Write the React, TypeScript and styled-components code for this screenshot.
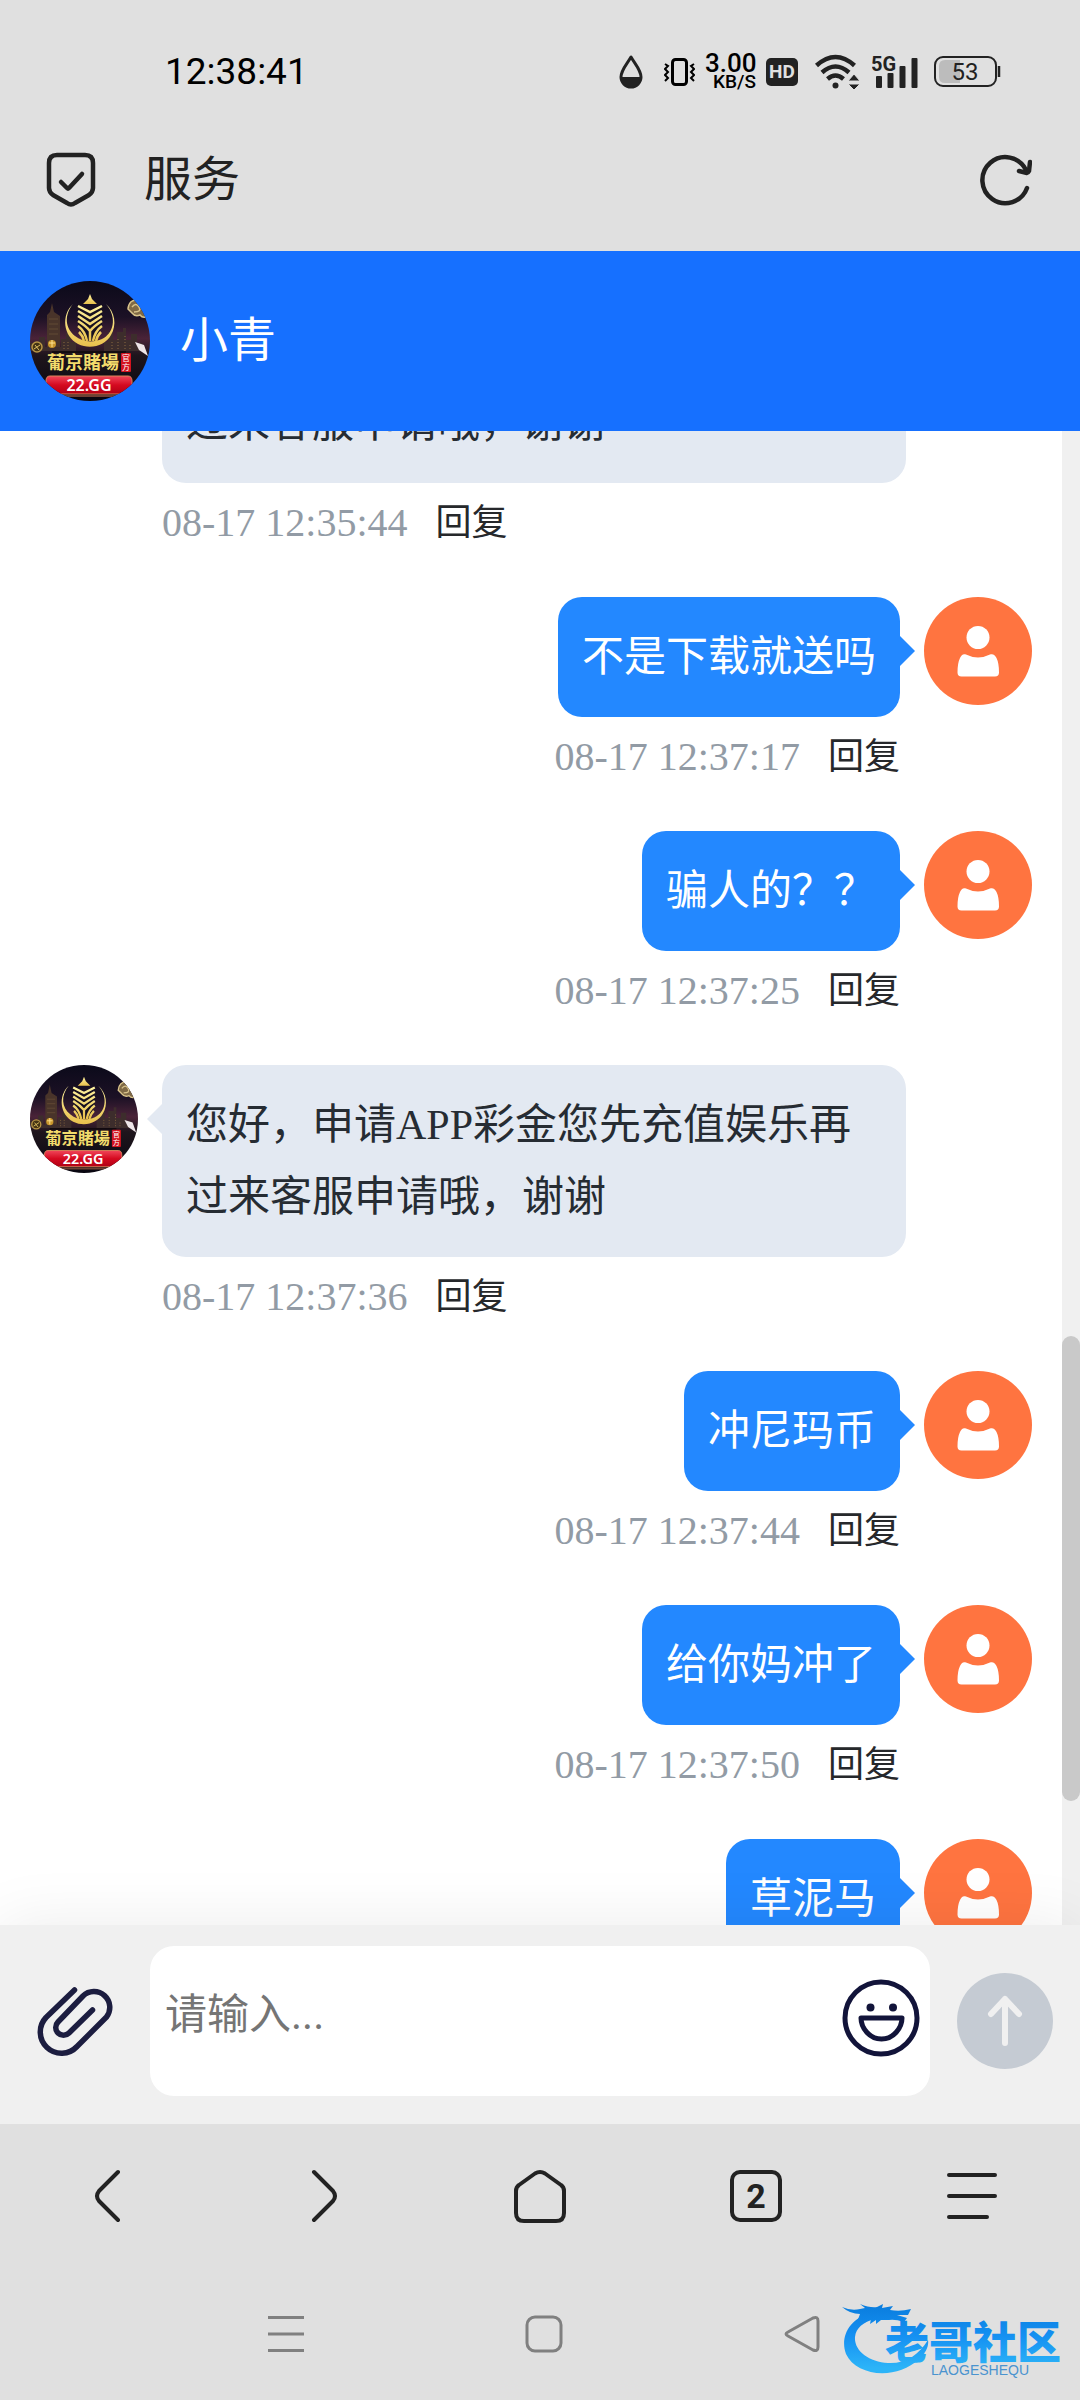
import React, { useLayoutEffect, useRef } from "react";
import styled, { createGlobalStyle } from "styled-components";

const sans = `Roboto, "Noto Sans CJK SC", sans-serif`;
const serif = `"Liberation Serif", "Noto Sans CJK SC", serif`;

const GlobalStyle = createGlobalStyle`
  * { box-sizing: border-box; }
  body { margin: 0; background: #e0e0e0; font-family: ${sans}; }
  button { border: 0; padding: 0; background: none; color: inherit; font: inherit; cursor: pointer; }
  svg { display: block; flex: none; }
`;

const Screen = styled.div`
  display: flex;
  flex-direction: column;
  height: 100vh;
  position: relative;
  background: #e0e0e0;
  color: #222;
`;

const StatusBar = styled.div`
  display: flex;
  align-items: center;
  justify-content: space-between;
  flex: none;
  height: 108px;
  padding: 36px 79px 0 165px;
  color: #000;
`;

const Clock = styled.time`
  font-size: 37px;
  line-height: 48px;
  font-weight: 400;
`;

const StatusIcons = styled.div`
  display: flex;
  align-items: center;
  gap: 10px;
`;

const NetSpeed = styled.div`
  width: 51px;
  text-align: right;
  font-weight: 500;
  font-size: 26px;
  line-height: 20px;
  small {
    display: block;
    font-size: 19px;
    line-height: 18px;
  }
`;

const HdBadge = styled.span`
  width: 32px;
  height: 28px;
  border-radius: 5px;
  background: #222;
  color: #e0e0e0;
  font-size: 19px;
  line-height: 28px;
  font-weight: 700;
  text-align: center;
`;

const AddressBar = styled.div`
  display: flex;
  align-items: center;
  flex: none;
  height: 143px;
  padding: 0 48px 0 46px;
  gap: 48px;
`;

const PageTitle = styled.h1`
  flex: 1;
  margin: 0;
  font-size: 48px;
  line-height: 72px;
  font-weight: 400;
`;

const ChatHeader = styled.header`
  display: flex;
  align-items: center;
  flex: none;
  gap: 30px;
  height: 180px;
  padding: 0 30px;
  background: #1670ff;
  color: #fff;
`;

const AgentName = styled.h2`
  margin: 0;
  font-size: 48px;
  line-height: 72px;
  font-weight: 400;
`;

const ChatArea = styled.main`
  display: grid;
  grid-template-columns: 1fr 18px;
  flex: 1;
  min-height: 0;
  background: #fff;
`;

const Messages = styled.ol`
  margin: 0;
  padding: 0 30px;
  min-height: 0;
  list-style: none;
  overflow-y: auto;
  scrollbar-width: none;
  font-family: ${serif};
`;

const Track = styled.div`
  min-height: 0;
  display: grid;
  grid-template-rows: 905fr 465fr 124fr;
  background: #f0f0f0;
`;

const Thumb = styled.div`
  grid-row: 2;
  border-radius: 9px;
  background: #c9c9c9;
`;

const MessageRow = styled.li<{ $mine?: boolean }>`
  display: flex;
  flex-direction: ${(p) => (p.$mine ? "row-reverse" : "row")};
  align-items: flex-start;
  gap: 24px;
  padding-bottom: 50px;
`;

const MessageBody = styled.div<{ $mine?: boolean }>`
  display: flex;
  flex-direction: column;
  align-items: ${(p) => (p.$mine ? "flex-end" : "flex-start")};
  ${(p) => (p.$mine ? "margin-left" : "margin-right")}: 126px;
`;

const Bubble = styled.p<{ $mine?: boolean }>`
  position: relative;
  margin: 0;
  padding: 24px;
  border-radius: 24px;
  background: ${(p) => (p.$mine ? "#2388ff" : "#e3e9f2")};
  color: ${(p) => (p.$mine ? "#fff" : "#262c33")};
  font-size: 42px;
  line-height: 72px;
  &::after {
    content: "";
    position: absolute;
    top: 39px;
    ${(p) => (p.$mine ? "left: 100%" : "right: 100%")};
    border: 15px solid transparent;
    ${(p) => (p.$mine ? "border-left-color: #2388ff; border-right: 0" : "border-right-color: #e3e9f2; border-left: 0")};
  }
`;

const Meta = styled.div`
  display: flex;
  align-items: center;
  gap: 28px;
  height: 48px;
  margin-top: 16px;
`;

const Stamp = styled.time`
  color: #929ba5;
  font-size: 40px;
  line-height: 48px;
`;

const Reply = styled.button`
  color: #26282b;
  font-family: ${sans};
  font-size: 36px;
  line-height: 48px;
`;

const Composer = styled.form`
  position: relative;
  display: grid;
  grid-template-columns: 150px 1fr 96px;
  align-items: center;
  flex: none;
  padding: 21px 27px 28px 0;
  background: #f0f0f0;
  box-shadow: 0 0 60px rgba(0, 0, 0, 0.08);
`;

const IconButton = styled.button`
  display: flex;
  align-items: center;
  justify-content: center;
`;

const InputBox = styled.div`
  display: flex;
  align-items: center;
  height: 150px;
  margin-right: 27px;
  padding: 0 10px 0 15px;
  border-radius: 24px;
  background: #fff;
`;

const TextBox = styled.textarea`
  flex: 1;
  min-width: 0;
  height: 150px;
  padding: 39px 0;
  border: 0;
  outline: 0;
  resize: none;
  background: transparent;
  color: #222;
  font-family: ${sans};
  font-size: 42px;
  line-height: 60px;
  &::placeholder { color: #757575; }
`;

const SendButton = styled(IconButton)`
  width: 96px;
  height: 96px;
  border-radius: 50%;
  background: #c5cbd3;
`;

const BrowserNav = styled.nav`
  position: relative;
  display: grid;
  grid-template-columns: repeat(5, 1fr);
  flex: none;
  height: 144px;
  background: #e0e0e0;
`;

const TabCount = styled.span`
  display: block;
  width: 52px;
  height: 52px;
  border: 4px solid #222;
  border-radius: 10px;
  font-size: 34px;
  line-height: 44px;
  font-weight: 700;
  text-align: center;
`;

const SystemNav = styled.nav`
  display: grid;
  grid-template-columns: repeat(3, 1fr);
  flex: none;
  height: 132px;
  padding: 0 149px 0 157px;
`;

const Watermark = styled.div`
  position: absolute;
  right: 12px;
  bottom: 20px;
`;

const AgentAvatar = ({ size }: { size: number }) => (
  <svg width={size} height={size} viewBox="0 0 120 120" role="img" aria-label="葡京賭場">
    <defs>
      <clipPath id={`round${size}`}><circle cx="60" cy="60" r="60" /></clipPath>
      <linearGradient id={`sky${size}`} x1="0" y1="0" x2="0" y2="1">
        <stop offset="0" stopColor="#0b0a1a" />
        <stop offset=".3" stopColor="#1c1125" />
        <stop offset=".48" stopColor="#4a2338" />
        <stop offset=".62" stopColor="#1e151c" />
        <stop offset="1" stopColor="#080610" />
      </linearGradient>
      <linearGradient id={`gold${size}`} x1="0" y1="0" x2="0" y2="1">
        <stop offset="0" stopColor="#fff3a0" />
        <stop offset="1" stopColor="#e8c04c" />
      </linearGradient>
      <linearGradient id={`red${size}`} x1="0" y1="0" x2="0" y2="1">
        <stop offset="0" stopColor="#f0465a" />
        <stop offset=".5" stopColor="#d50a20" />
        <stop offset="1" stopColor="#b00014" />
      </linearGradient>
    </defs>
    <g clipPath={`url(#round${size})`}>
      <rect width="120" height="120" fill={`url(#sky${size})`} />
      <path d="M17 70V34l3-3 2-9 2 9 6 4v35z" fill="#49342a" />
      <path d="M19 38h9M19 43h9M19 48h9M19 53h9" stroke="#634a34" strokeWidth="1" />
      <path d="M0 70V62h9v-6h6v10h16v-8h5v-6h5v9h5v9zM74 70v-9h4V51h5v8h4v-8h6v-4h3v12h5v-6h6v9h5v8z" fill="#3d2d2c" />
      <path d="M34 68v-7M38 68v-9M82 68v-9M88 68V56M95 68V55M100 68v-6" stroke="#8a6a40" strokeWidth="1" strokeDasharray="1 2" />
      <path d="M43 23C31 34 33 55 48 63c12 6 27 2 33-9 6-10 4-23-5-31 12 14 7 30-4 35-9 4-20 3-27-3-10-8-11-21-2-32z" fill={`url(#gold${size})`} />
      <path d="M60 13l2 5 5 5H53l5-5z" fill={`url(#gold${size})`} />
      <path d="M48 24l12 8 12-8v20l-6 16H54l-6-16z" fill="#161020" />
      <path
        d="M48 25l12 6 12-6M48 30l12 7 12-7M48 35l12 8 12-8M48 40q8 5 12 10 4-5 12-10M48 45q7 5 9 15M72 45q-7 5-9 15M49 51q4 4 5 9M71 51q-4 4-5 9M60 49v11"
        fill="none" stroke={`url(#gold${size})`} strokeWidth="2.500"
      />
      <path d="M98 28q1-10 10-9l6 7 4 9q-5 3-8-1-5 2-8-2zm4-2q4-5 7 0t-5 5" fill="#806a46" stroke="#d8c38b" strokeWidth="1.500" />
      <circle cx="7" cy="66" r="5" fill="#453414" stroke="#b89544" strokeWidth="1.500" />
      <path d="M4 68l6-4M5 64l4 5" stroke="#dfbf62" />
      <circle cx="22" cy="63" r="4" fill="#c8952b" /><path d="M19 62h6M22 59v7" stroke="#ffe391" />
      <path d="M105 61l9 3 4 11-9-6z" fill="#eee5e8" />
      <path d="M22 71h74" stroke="#000" />
      <text x="17" y="88" fontFamily="Noto Sans CJK TC, sans-serif" fontSize="18" fontWeight="700" fill="#f3dc6c">葡京賭場</text>
      <rect x="91" y="72" width="10" height="19" rx="1" fill="#d3131f" />
      <text x="92" y="80" fontFamily="Noto Sans CJK SC, sans-serif" fontSize="8" fill="#fff">官</text>
      <text x="92" y="89" fontFamily="Noto Sans CJK SC, sans-serif" fontSize="8" fill="#fff">方</text>
      <path d="M20 95h78q4 0 4 5v6q0 7-5 7H21q-5 0-5-7v-6q0-5 4-5z" fill={`url(#red${size})`} stroke="#d98358" strokeWidth="1" />
      <path d="M15 115h90" stroke="#6e4033" strokeWidth="2" />
      <text x="59" y="110" textAnchor="middle" fontFamily="Noto Sans, sans-serif" fontSize="16" fontWeight="600" fill="#fff">22.GG</text>
    </g>
  </svg>
);

const VisitorAvatar = () => (
  <svg width="108" height="108" viewBox="0 0 108 108" role="img" aria-label="访客">
    <circle cx="54" cy="54" r="54" fill="#ff7440" />
    <circle cx="54" cy="40.500" r="11.500" fill="#fff" />
    <path d="M42 57.500q12 6 24 0c3-1 5 .5 6.500 3.500q2.500 5 2.500 14.500 0 4-4 4H37.500q-4 0-4-4 0-9.500 2.500-14.500c1.500-3 3-4.500 6-3.500z" fill="#fff" />
  </svg>
);

const line = {
  fill: "none",
  stroke: "currentColor",
  strokeWidth: 4,
  strokeLinecap: "round" as const,
  strokeLinejoin: "round" as const,
};

const DropIcon = () => (
  <svg width="35" height="36" viewBox="0 0 35 36">
    <path d="M12 3C8 10 2 16 2 23a10 10 0 0 0 20 0C22 16 16 10 12 3z" fill="none" stroke="#222" strokeWidth="3" strokeLinejoin="round" />
    <path d="M2 23h20a10 10 0 0 1-20 0z" fill="#222" />
  </svg>
);

const VibrateIcon = () => (
  <svg width="31" height="32" viewBox="0 0 31 32" fill="none" stroke="#000">
    <rect x="8.500" y="3.500" width="14" height="25" rx="3" strokeWidth="3" />
    <path d="M1 8l3 2-3 3 3 3-3 3 3 3-3 3M30 8l-3 2 3 3-3 3 3 3-3 3 3 3" strokeWidth="2" />
  </svg>
);

const WifiIcon = () => (
  <svg width="54" height="36" viewBox="0 0 54 36" fill="none" stroke="#222" strokeWidth="4.500">
    <path d="M8.500 11.500q19-17 38 0M14 18.500q13.500-12 27 0M19.500 25q8-7 16 0" />
    <circle cx="27.500" cy="31.500" r="3" fill="#222" stroke="none" />
    <path d="M46 20l6 7H40zM46 36l6-6H40z" fill="#222" stroke="#e0e0e0" strokeWidth="1" />
  </svg>
);

const SignalIcon = () => (
  <svg width="52" height="36" viewBox="0 0 52 36" fill="#222">
    <text x="-1" y="17" fontFamily="Roboto, sans-serif" fontSize="20" fontWeight="700">5G</text>
    <rect x="4" y="22" width="6" height="12" rx="1" />
    <rect x="15.500" y="19" width="6" height="15" rx="1" />
    <rect x="27.500" y="12" width="6" height="22" rx="1" />
    <rect x="39.500" y="4" width="6" height="30" rx="1" />
  </svg>
);

const BatteryIcon = () => (
  <svg width="67" height="34" viewBox="0 0 67 34">
    <rect x="1" y="2" width="61" height="29" rx="8" fill="none" stroke="#222" strokeWidth="2" />
    <path d="M11 5h15v23H11q-6 0-6-6V11q0-6 6-6z" fill="#bcbcbc" />
    <path d="M65 11v11" stroke="#222" strokeWidth="2.500" />
    <text x="31" y="25" textAnchor="middle" fontFamily="Roboto, sans-serif" fontSize="24" fill="#222">53</text>
  </svg>
);

const ShieldIcon = () => (
  <svg width="50" height="56" viewBox="0 0 50 56" {...line} strokeWidth="4.500">
    <path d="M11 3h28q8 0 8 8v25q0 4-4 7l-14 8q-4 3-8 0L7 43q-4-3-4-7V11q0-8 8-8z" />
    <path d="M15 30l6 6q1 1 2 0l13-14" />
  </svg>
);

const RefreshIcon = () => (
  <svg width="52" height="52" viewBox="0 0 52 52" {...line} strokeWidth="4.500">
    <path d="M47 34a23 23 0 1 1-1-18" />
    <path d="M39 17l8 2q1 0 2-2l1-9" />
  </svg>
);

const ClipIcon = () => (
  <svg width="80" height="72" viewBox="0 0 80 72" {...line} stroke="#1c1d40" strokeWidth="5.500">
    <path d="M39.500 5L11 32.500A20.800 20.800 0 0 0 42 61.500L71.500 32A15.800 15.800 0 0 0 48 11L23 37A7.500 7.500 0 0 0 34 48L57.500 25" />
  </svg>
);

const SmileIcon = () => (
  <svg width="78" height="84" viewBox="0 0 78 84" {...line} stroke="#12143a" strokeWidth="5">
    <circle cx="39" cy="39" r="36" />
    <circle cx="28.500" cy="28.500" r="4" fill="#12143a" stroke="none" />
    <circle cx="51" cy="28.500" r="4" fill="#12143a" stroke="none" />
    <path d="M19 39h41q0 8-6 14.500-6 6.500-14.500 6.500T25 53.500Q19 47 19 39z" />
  </svg>
);

const SendIcon = () => (
  <svg width="40" height="56" viewBox="0 0 40 56" {...line} stroke="#f0f0f0" strokeWidth="6">
    <path d="M20 50V6M6 21L20 6l14 15" />
  </svg>
);

const BackIcon = () => (
  <svg width="28" height="56" viewBox="0 0 28 56" {...line}>
    <path d="M24 4L5 23q-4 5 0 10l19 19" />
  </svg>
);

const ForwardIcon = () => (
  <svg width="28" height="56" viewBox="0 0 28 56" {...line}>
    <path d="M4 4l19 19q4 5 0 10L4 52" />
  </svg>
);

const HomeIcon = () => (
  <svg width="54" height="56" viewBox="0 0 54 56" {...line}>
    <path d="M22 5.500q5-3 10 0L48 17q3 2 3 6v22q0 8-8 8H11q-8 0-8-8V23q0-4 3-6z" />
  </svg>
);

const MenuIcon = () => (
  <svg width="50" height="48" viewBox="0 0 50 48" {...line}>
    <path d="M2 3h46M2 24h46M2 45h38" />
  </svg>
);

const sysLine = { fill: "none", stroke: "#808080", strokeWidth: 3, strokeLinejoin: "round" as const };

const dialogue = [
  { mine: false, text: "您好，申请APP彩金您先充值娱乐再过来客服申请哦，谢谢", at: "08-17 12:35:44" },
  { mine: true, text: "不是下载就送吗", at: "08-17 12:37:17" },
  { mine: true, text: "骗人的？？", at: "08-17 12:37:25" },
  { mine: false, text: "您好，申请APP彩金您先充值娱乐再过来客服申请哦，谢谢", at: "08-17 12:37:36" },
  { mine: true, text: "冲尼玛币", at: "08-17 12:37:44" },
  { mine: true, text: "给你妈冲了", at: "08-17 12:37:50" },
  { mine: true, text: "草泥马", at: "08-17 12:37:56" },
];

export default function App() {
  const list = useRef<HTMLOListElement>(null);

  useLayoutEffect(() => {
    if (list.current) list.current.scrollTop = 140;
  }, []);

  return (
    <>
      <GlobalStyle />
      <Screen>
        <StatusBar>
          <Clock>12:38:41</Clock>
          <StatusIcons>
            <DropIcon />
            <VibrateIcon />
            <NetSpeed>3.00<small>KB/S</small></NetSpeed>
            <HdBadge>HD</HdBadge>
            <WifiIcon />
            <SignalIcon />
            <BatteryIcon />
          </StatusIcons>
        </StatusBar>
        <AddressBar>
          <IconButton aria-label="安全"><ShieldIcon /></IconButton>
          <PageTitle>服务</PageTitle>
          <IconButton aria-label="刷新"><RefreshIcon /></IconButton>
        </AddressBar>
        <ChatHeader>
          <AgentAvatar size={120} />
          <AgentName>小青</AgentName>
        </ChatHeader>
        <ChatArea>
          <Messages ref={list}>
            {dialogue.map((m) => (
              <MessageRow key={m.at} $mine={m.mine}>
                {m.mine ? <VisitorAvatar /> : <AgentAvatar size={108} />}
                <MessageBody $mine={m.mine}>
                  <Bubble $mine={m.mine}>{m.text}</Bubble>
                  <Meta>
                    <Stamp>{m.at}</Stamp>
                    <Reply type="button">回复</Reply>
                  </Meta>
                </MessageBody>
              </MessageRow>
            ))}
          </Messages>
          <Track><Thumb /></Track>
        </ChatArea>
        <Composer onSubmit={(e) => e.preventDefault()}>
          <IconButton type="button" aria-label="附件"><ClipIcon /></IconButton>
          <InputBox>
            <TextBox aria-label="消息" placeholder="请输入..." />
            <IconButton type="button" aria-label="表情"><SmileIcon /></IconButton>
          </InputBox>
          <SendButton type="submit" aria-label="发送"><SendIcon /></SendButton>
        </Composer>
        <BrowserNav>
          <IconButton aria-label="后退"><BackIcon /></IconButton>
          <IconButton aria-label="前进"><ForwardIcon /></IconButton>
          <IconButton aria-label="主页"><HomeIcon /></IconButton>
          <IconButton aria-label="标签页"><TabCount>2</TabCount></IconButton>
          <IconButton aria-label="菜单"><MenuIcon /></IconButton>
        </BrowserNav>
        <SystemNav>
          <IconButton aria-label="最近任务">
            <svg width="36" height="38" viewBox="0 0 36 38" {...sysLine}><path d="M0 2.500h36M0 19h36M0 35.500h36" /></svg>
          </IconButton>
          <IconButton aria-label="桌面">
            <svg width="38" height="38" viewBox="0 0 38 38" {...sysLine}><rect x="2" y="2" width="34" height="34" rx="8" /></svg>
          </IconButton>
          <IconButton aria-label="返回">
            <svg width="36" height="38" viewBox="0 0 36 38" {...sysLine}><path d="M29 3q5-2 5 3v26q0 5-5 3L4 21q-4-2 0-4z" /></svg>
          </IconButton>
        </SystemNav>
        <Watermark>
          <svg width="228" height="80" viewBox="0 0 228 80" role="img" aria-label="老哥社区">
            <defs>
              <linearGradient id="wm" x1="0" y1="0" x2="0" y2="80" gradientUnits="userSpaceOnUse">
                <stop offset=".1" stopColor="#0b7fe0" />
                <stop offset=".45" stopColor="#1590f2" />
                <stop offset=".85" stopColor="#2cb4f8" />
              </linearGradient>
            </defs>
            <g fill="url(#wm)">
              <path d="M32 12C8 19 0 38 6 54c10 22 50 27 73 5 7-6 10-13 9-19-9 15-23 24-40 23C29 62 14 51 15 37c1-9 8-15 20-18z" />
              <path d="M2 7q9 4 18 2l5-1-5-4q10 4 17 3l6-3-1 4 11-2-3 4q10 2 21-1l-3 6-11 0 10 3-3 4q-9-3-15-2l-8 0-5 4v-4l-6 4 1-5-7 4 2-5-9 4 3-8q-10 0-18-7z" />
              <text x="45" y="59" fontFamily="Noto Sans CJK SC, sans-serif" fontSize="44" fontWeight="900">老哥社区</text>
            </g>
            <text x="91" y="75" fontFamily="Liberation Sans, sans-serif" fontSize="14" fill="#4a93cf">LAOGESHEQU</text>
          </svg>
        </Watermark>
      </Screen>
    </>
  );
}
